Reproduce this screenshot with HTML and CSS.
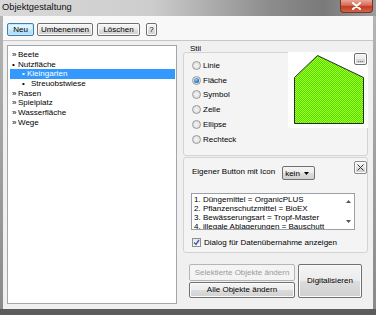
FILE: index.html
```
<!DOCTYPE html>
<html lang="de">
<head>
<meta charset="utf-8">
<title>Objektgestaltung</title>
<link rel="stylesheet" href="styles.css">
</head>
<body>
<div class="win">
  <div class="titlebar">
    <span class="title">Objektgestaltung</span>
    <div class="close">
      <svg width="11" height="8" viewBox="0 0 11 8"><path d="M2 1 L9 7 M9 1 L2 7" stroke="#fff" stroke-width="2" stroke-linecap="round"/></svg>
    </div>
  </div>
  <div class="frame">
    <div class="client">
      <div class="toolbar">
        <button class="btn btn-default b-neu">Neu</button>
        <button class="btn b-umb">Umbenennen</button>
        <button class="btn b-del">Löschen</button>
        <button class="btn b-help">?</button>
      </div>
      <div class="main">
        <div class="tree">
          <div class="node"><span class="mk">»</span>Beete</div>
          <div class="node"><span class="mk">•</span>Nutzfläche</div>
          <div class="node child sel"><span class="mk mk-c1">•</span>Kleingarten</div>
          <div class="node child"><span class="mk mk-c2">•</span>Streuobstwiese</div>
          <div class="node"><span class="mk">»</span>Rasen</div>
          <div class="node"><span class="mk">»</span>Spielplatz</div>
          <div class="node"><span class="mk">»</span>Wasserfläche</div>
          <div class="node"><span class="mk">»</span>Wege</div>
        </div>
        <div class="right">
          <div class="stil-label">Stil</div>
          <div class="group g1">
            <div class="radios">
              <div class="radio-row"><span class="radio"></span>Linie</div>
              <div class="radio-row"><span class="radio on"></span>Fläche</div>
              <div class="radio-row"><span class="radio"></span>Symbol</div>
              <div class="radio-row"><span class="radio"></span>Zelle</div>
              <div class="radio-row"><span class="radio"></span>Ellipse</div>
              <div class="radio-row"><span class="radio"></span>Rechteck</div>
            </div>
            <div class="preview">
              <svg width="80" height="76" viewBox="0 0 80 76">
                <defs>
                  <pattern id="dots" width="2" height="2" patternUnits="userSpaceOnUse">
                    <rect width="2" height="2" fill="#4cdf00"/>
                    <rect width="1" height="1" fill="#a6ff26"/>
                    <rect x="1" y="1" width="1" height="1" fill="#a6ff26"/>
                  </pattern>
                </defs>
                <polygon points="6.5,25.5 29.5,3.5 75.5,25.5 75.5,71.5 6.5,71.5" fill="url(#dots)" stroke="#2a2a2a" stroke-width="1"/>
              </svg>
              <button class="btn dots-btn">...</button>
            </div>
          </div>
          <div class="group g2">
            <div class="icon-row">
              <span class="icon-label">Eigener Button mit Icon</span>
              <div class="combo"><span>kein</span><svg width="5" height="3" viewBox="0 0 5 3"><path d="M0 0 H5 L2.5 3 Z" fill="#000"/></svg></div>
              <button class="btn xbtn"><svg width="7" height="7" viewBox="0 0 7 7"><path d="M0.5 0.5 L6.5 6.5 M6.5 0.5 L0.5 6.5" stroke="#333" stroke-width="1"/></svg></button>
            </div>
            <div class="listbox">
              <div class="lb-lines">
                <div>1. Düngemittel = OrganicPLUS</div>
                <div>2. Pflanzenschutzmittel = BioEX</div>
                <div>3. Bewässerungsart = Tropf-Master</div>
                <div>4. illegale Ablagerungen = Bauschutt</div>
              </div>
              <div class="lb-scroll">
                <svg width="5" height="3" viewBox="0 0 5 3"><path d="M0 3 H5 L2.5 0 Z" fill="#555"/></svg>
                <svg width="5" height="3" viewBox="0 0 5 3"><path d="M0 0 H5 L2.5 3 Z" fill="#555"/></svg>
              </div>
            </div>
            <div class="check-row">
              <span class="check"><svg width="7" height="7" viewBox="0 0 7 7"><path d="M1 3.5 L3 5.5 L6 1" stroke="#3a5fa8" stroke-width="1.4" fill="none"/></svg></span>
              <span>Dialog für Datenübernahme anzeigen</span>
            </div>
          </div>
          <div class="actions">
            <div class="act-col">
              <button class="btn btn-disabled b-sel">Selektierte Objekte ändern</button>
              <button class="btn b-all">Alle Objekte ändern</button>
            </div>
            <button class="btn b-dig">Digitalisieren</button>
          </div>
        </div>
      </div>
    </div>
  </div>
</div>
</body>
</html>
```
FILE: styles.css
```
* { box-sizing: border-box; }
html, body { margin: 0; padding: 0; }
body {
  width: 376px;
  height: 315px;
  overflow: hidden;
  font-family: "Liberation Sans", Arial, sans-serif;
  font-size: 8px;
  color: #000;
}
.win {
  width: 376px;
  height: 315px;
  display: flex;
  flex-direction: column;
}
.titlebar {
  height: 16px;
  flex: none;
  display: flex;
  align-items: flex-start;
  background: linear-gradient(90deg, #d9d9d9 0%, #cdcdcd 40%, #8c8c8c 72%, #7a7a7a 86%, #9c9c9c 100%);
}
.title {
  font-size: 9.3px;
  line-height: 14px;
  padding-left: 2px;
  color: #111;
}
.close {
  margin-left: auto;
  margin-right: 3px;
  width: 33px;
  height: 13px;
  border: 1px solid #7a3326;
  border-top: none;
  border-radius: 0 0 4px 4px;
  background: linear-gradient(#e8a797 0%, #d56a55 45%, #c23d22 55%, #d0654b 100%);
  display: flex;
  align-items: center;
  justify-content: center;
}
.frame {
  flex: 1;
  display: flex;
  padding: 0 3px;
  background: linear-gradient(#b4b4b4, #8a8a8a);
  border-bottom: 6px solid #5c5c5c;
}
.client {
  flex: 1;
  display: flex;
  flex-direction: column;
  background: #f0f0f0;
}
.toolbar {
  height: 25px;
  flex: none;
  display: flex;
  align-items: flex-start;
  padding: 7px 0 0 4px;
  background: #f8f8f8;
  border-bottom: 1px solid #c6c6c6;
}
.btn {
  font-family: "Liberation Sans", Arial, sans-serif;
  font-size: 8px;
  color: #000;
  padding: 0;
  margin: 0;
  border: 1px solid #707070;
  border-radius: 2px;
  background: linear-gradient(#f4f4f4 0%, #ececec 48%, #dcdcdc 52%, #d0d0d0 100%);
  box-shadow: inset 0 0 0 1px #fbfbfb;
  display: flex;
  align-items: center;
  justify-content: center;
  line-height: 1;
}
.btn-default {
  border-color: #3c7fb1;
  background: linear-gradient(#eaf6fd 0%, #d9f0fc 48%, #bee6fd 52%, #a7d9f5 100%);
  box-shadow: inset 0 0 0 1px #c6e8fb;
}
.btn-disabled {
  border-color: #b5b5b5;
  background: #f4f4f4;
  box-shadow: none;
  color: #9a9a9a;
}
.b-neu { width: 27px; height: 13px; }
.b-umb { width: 56px; height: 13px; margin-left: 3px; }
.b-del { width: 43px; height: 13px; margin-left: 4px; }
.b-help { width: 11px; height: 13px; margin-left: 6px; }
.main {
  flex: 1;
  display: flex;
  padding: 4px 5px 5px 4px;
  gap: 6px;
}
.tree {
  width: 170px;
  background: #fff;
  border: 1px solid #a3a6ad;
  padding-top: 4px;
}
.node {
  height: 9.7px;
  line-height: 9.7px;
  margin: 0 1px 0 2px;
  padding-left: 2px;
  white-space: nowrap;
}
.mk {
  display: inline-block;
  width: 6px;
}
.child { padding-left: 12px; }
.mk-c1 { width: 5px; }
.mk-c2 { width: 9px; }
.sel {
  background: #3399ff;
  color: #fff;
}
.right {
  width: 185px;
  display: flex;
  flex-direction: column;
}
.stil-label {
  height: 7px;
  line-height: 7px;
  padding-left: 7px;
}
.group {
  border: 1px solid #d3d3d3;
  border-radius: 3px;
  background: #f4f4f4;
}
.g1 {
  height: 104px;
  display: flex;
  align-items: flex-start;
}
.radios {
  flex: 1;
  padding: 5px 0 0 8px;
}
.radio-row {
  height: 14.8px;
  display: flex;
  align-items: center;
}
.radio {
  width: 9px;
  height: 9px;
  border-radius: 50%;
  border: 1px solid #9a9a9a;
  background: radial-gradient(circle at 50% 50%, #f6f6f6 0%, #e2e2e2 60%, #d4d4d4 100%);
  margin-right: 2px;
  display: flex;
  align-items: center;
  justify-content: center;
}
.radio.on::after {
  content: "";
  width: 5px;
  height: 5px;
  border-radius: 50%;
  background: radial-gradient(circle at 40% 35%, #9fd3f7 0%, #2b7fcf 55%, #124c8e 100%);
}
.preview {
  width: 80px;
  height: 76px;
  margin: -1px -1px 0 0;
  background: #fff;
  position: relative;
}
.preview svg { display: block; }
.dots-btn {
  position: absolute;
  top: 1px;
  right: 1px;
  width: 13px;
  height: 12px;
  font-size: 7px;
  align-items: flex-start;
  padding-top: 2px;
}
.g2 {
  height: 96px;
  margin-top: 1px;
  padding-top: 3px;
}
.icon-row {
  height: 19px;
  display: flex;
  align-items: flex-end;
}
.icon-label {
  line-height: 10px;
  margin: 0 0 3px 8px;
  white-space: nowrap;
}
.combo {
  width: 33px;
  height: 14px;
  margin-left: 7px;
  border: 1px solid #707070;
  border-radius: 2px;
  background: linear-gradient(#f4f4f4 0%, #ececec 48%, #dcdcdc 52%, #d0d0d0 100%);
  display: flex;
  align-items: center;
  padding: 0 5px 0 2px;
  justify-content: space-between;
}
.xbtn {
  align-self: flex-start;
  margin-left: auto;
  margin-right: 0;
  width: 13px;
  height: 13px;
  border-color: #8a8a8a;
}
.listbox {
  width: 164px;
  height: 37px;
  margin: 13px 0 0 7px;
  background: #fff;
  border: 1px solid #9aa0a8;
  display: flex;
  overflow: hidden;
}
.lb-lines {
  flex: 1;
  padding: 1px 0 0 2px;
  white-space: nowrap;
  overflow: hidden;
}
.lb-lines div {
  height: 9px;
  line-height: 9px;
}
.lb-scroll {
  width: 12px;
  display: flex;
  flex-direction: column;
  justify-content: space-between;
  align-items: center;
  padding: 6px 0 6px;
}
.lb-scroll svg { display: block; }
.check-row {
  margin: 8px 0 0 8px;
  height: 9px;
  display: flex;
  align-items: center;
  white-space: nowrap;
}
.check {
  width: 9px;
  height: 9px;
  border: 1px solid #8f8f8f;
  background: linear-gradient(#e8e8e8, #fafafa);
  margin-right: 3px;
  display: flex;
  align-items: center;
  justify-content: center;
}
.actions {
  margin: 11px 0 0 6px;
  display: flex;
  align-items: flex-start;
}
.act-col {
  width: 106px;
  display: flex;
  flex-direction: column;
  gap: 1px;
}
.b-sel { width: 106px; height: 17px; }
.b-all { width: 106px; height: 16px; }
.b-dig {
  width: 64px;
  height: 34px;
  margin-left: 3px;
}
```
